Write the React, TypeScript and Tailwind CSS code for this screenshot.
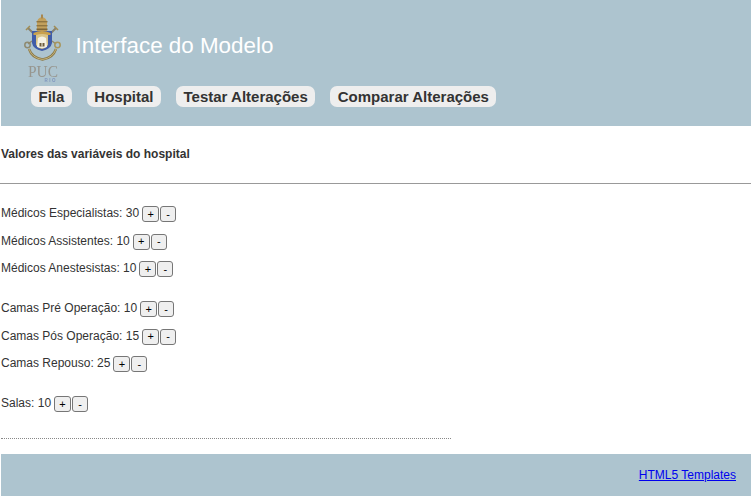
import React from 'react';

const navItems = ['Fila', 'Hospital', 'Testar Alterações', 'Comparar Alterações'];

const groups = [
  [
    { label: 'Médicos Especialistas', value: 30 },
    { label: 'Médicos Assistentes', value: 10 },
    { label: 'Médicos Anestesistas', value: 10 },
  ],
  [
    { label: 'Camas Pré Operação', value: 10 },
    { label: 'Camas Pós Operação', value: 15 },
    { label: 'Camas Repouso', value: 25 },
  ],
  [{ label: 'Salas', value: 10 }],
];

const PucLogo = () => (
  <svg width="38" height="68" viewBox="0 0 38 68" className="shrink-0">
    <defs>
      <filter id="soft" x="-10%" y="-10%" width="120%" height="120%">
        <feGaussianBlur stdDeviation="0.35" />
      </filter>
    </defs>
    <g filter="url(#soft)">
      {/* crown */}
      <path d="M13 17 L13 9 Q13 4 18 3 Q23 4 23 9 L23 17 Z" fill="#c2a05c" />
      <rect x="17" y="0.5" width="2" height="4" fill="#a8874f" />
      <rect x="12.5" y="7" width="11" height="1.4" fill="#8f7440" />
      <rect x="12.5" y="11" width="11" height="1.4" fill="#8f7440" />
      <rect x="12.5" y="14.5" width="11" height="1.6" fill="#7d6536" />
      {/* upper key ends */}
      <path d="M9 19 L4 14 M27 19 L32 14" stroke="#86826f" strokeWidth="2" />
      <path d="M2 16 L6 12 M30 12 L34 16" stroke="#a08c55" strokeWidth="1.6" />
      {/* key rings */}
      <path d="M8 27 L4 30 M28 27 L32 30" stroke="#8f8a70" strokeWidth="1.5" />
      <circle cx="3.5" cy="31" r="2.7" fill="none" stroke="#8f8a70" strokeWidth="1.5" />
      <circle cx="33.5" cy="31" r="2.7" fill="none" stroke="#a8965c" strokeWidth="1.5" />
      {/* ribbon */}
      <path d="M5 35 Q8 44 18.5 45.5 Q29 44 32 35" fill="none" stroke="#8c7a48" strokeWidth="2.4" />
      <path d="M5 35 Q8 44 18.5 45.5 Q29 44 32 35" fill="none" stroke="#d8c98f" strokeWidth="0.7" />
      {/* shield */}
      <path d="M8 17 L28 17 L28 29 Q27 35 18 37 Q9 35 8 29 Z" fill="#3f5ca8" />
      <path d="M9.5 19 Q18 15 26.5 19 L26.5 21 L9.5 21 Z" fill="#c9a14d" />
      <path d="M12 21 Q18 19 24 21 L24 31 Q22 34 18 35 Q14 34 12 31 Z" fill="#d9c58a" />
      <path d="M14 24 Q18 21 22 24 L23 33 Q18 35 13 33 Z" fill="#f4f1e4" />
      <rect x="15.5" y="29" width="5" height="3.5" fill="#6d5c3a" />
      <rect x="17.5" y="29" width="1" height="3.5" fill="#f4f1e4" />
      <text x="19" y="63" textAnchor="middle" fontFamily="'Liberation Serif', serif" fontSize="17" textLength="30" lengthAdjust="spacingAndGlyphs" fill="#97968f">
        PUC
      </text>
      <text x="26" y="67.5" textAnchor="middle" fontFamily="'Liberation Sans', sans-serif" fontSize="4.5" fontWeight="700" textLength="11" fill="#7f95bd">
        RIO
      </text>
    </g>
  </svg>
);

const StepButton = ({ children, className }: { children: string; className: string }) => (
  <button className={`flex h-[16px] items-center justify-center rounded-[3px] border border-[#767676] bg-[#efefef] text-[11px] leading-none text-black ${className}`}>
    {children}
  </button>
);

export default function App() {
  return (
    <div className="min-h-[498px] bg-white font-['Liberation_Sans',Arial,sans-serif] text-[12px] text-[#333]">
      <header className="ml-px h-[126px] bg-[#adc4cf] pl-[23px] pt-[14px]">
        <div className="flex items-start gap-[14px]">
          <PucLogo />
          <h1 className="mt-[18px] -ml-[0.5px] text-[22.4px] leading-[28px] font-normal text-white">Interface do Modelo</h1>
        </div>
        <nav className="mt-[4px] ml-[7px] flex gap-[15px]">
          {navItems.map((item) => (
            <a key={item} className="h-[21px] rounded-[7px] bg-[#eeeeee] px-[7.5px] text-[15px] leading-[21px] font-bold text-[#333]">
              {item}
            </a>
          ))}
        </nav>
      </header>

      <main className="pl-px">
        <h2 className="pt-[21px] text-[12px] leading-[14px] font-bold">Valores das variáveis do hospital</h2>
        <hr className="mt-[22px] -ml-px border-0 border-t border-[#999]" />
        <div className="mt-[22px] flex flex-col gap-[24px]">
          {groups.map((group, i) => (
            <div key={i} className="flex flex-col gap-[11.5px]">
              {group.map((row) => (
                <div key={row.label} className="flex h-[16px] items-start">
                  <span className="mr-[3px] leading-[14px]">
                    {row.label}: {row.value}
                  </span>
                  <StepButton className="mr-px w-[17px]">+</StepButton>
                  <StepButton className="w-[16px]">-</StepButton>
                </div>
              ))}
            </div>
          ))}
        </div>
        <div className="mt-[26px] w-[450px] border-t border-dotted border-[#888]" />
      </main>

      <footer className="mt-[15px] ml-px flex h-[42px] items-center justify-end bg-[#adc4cf] pr-[15px]">
        <a href="#" className="text-[12px] text-[#0000ee] underline">
          HTML5 Templates
        </a>
      </footer>
    </div>
  );
}
